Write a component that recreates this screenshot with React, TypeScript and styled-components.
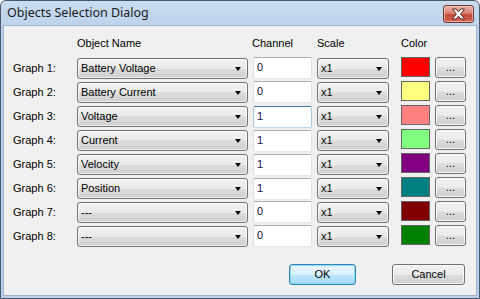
import React from 'react';
import styled, { createGlobalStyle } from 'styled-components';

interface GraphRow {
  name: string;
  channel: string;
  color: string;
  focused?: boolean;
}

const rows: GraphRow[] = [
  { name: 'Battery Voltage', channel: '0', color: '#ff0000' },
  { name: 'Battery Current', channel: '0', color: '#ffff80' },
  { name: 'Voltage', channel: '1', color: '#ff8080', focused: true },
  { name: 'Current', channel: '1', color: '#80ff80' },
  { name: 'Velocity', channel: '1', color: '#800080' },
  { name: 'Position', channel: '1', color: '#008080' },
  { name: '---', channel: '0', color: '#800000' },
  { name: '---', channel: '0', color: '#008000' },
];

const GlobalStyle = createGlobalStyle`
  html, body {
    margin: 0;
    padding: 0;
    background: #ffffff;
  }
  * {
    box-sizing: border-box;
  }
`;

const App: React.FC = () => {
  return (
    <>
      <GlobalStyle />
      <Window>
        <TitleBar>
          <Title>Objects Selection Dialog</Title>
          <CloseButton>
            <svg width="15" height="12" viewBox="0 0 15 12">
              <path
                d="M1.5 1 L5.2 1 L7.5 3.8 L9.8 1 L13.5 1 L9.6 6 L13.5 11 L9.8 11 L7.5 8.2 L5.2 11 L1.5 11 L5.4 6 Z"
                fill="#ffffff"
                stroke="#4a1a14"
                strokeWidth="0.9"
                strokeLinejoin="round"
              />
            </svg>
          </CloseButton>
        </TitleBar>
        <Client>
          <Grid>
            <span />
            <HeaderCell>Object Name</HeaderCell>
            <HeaderCell $shift={-1}>Channel</HeaderCell>
            <HeaderCell>Scale</HeaderCell>
            <HeaderCell>Color</HeaderCell>
            <span />
            {rows.map((row, i) => (
              <React.Fragment key={i}>
                <RowLabel>Graph {i + 1}:</RowLabel>
                <Combo $width={171}>
                  <span>{row.name}</span>
                  <Arrow />
                </Combo>
                <Edit $focused={row.focused} $low={i >= 2 && i <= 5}>
                  {row.channel}
                </Edit>
                <Combo $width={72}>
                  <span>x1</span>
                  <Arrow />
                </Combo>
                <Swatch style={{ background: row.color }} />
                <PushButton $width={31}>...</PushButton>
              </React.Fragment>
            ))}
          </Grid>
          <Footer>
            <PushButton $width={67} $default>
              OK
            </PushButton>
            <PushButton $width={73}>Cancel</PushButton>
          </Footer>
        </Client>
      </Window>
    </>
  );
};

export default App;

const Window = styled.div`
  width: 480px;
  height: 299px;
  display: flex;
  flex-direction: column;
  border: 1px solid #4a5868;
  border-radius: 6px 6px 0 0;
  background: linear-gradient(#c9dcf1, #b9d1ea 30px);
  padding: 0 2px 2px 2px;
  font-family: 'Liberation Sans', Arial, sans-serif;
  font-size: 11px;
  color: #000;
`;

const TitleBar = styled.div`
  height: 24px;
  display: flex;
  justify-content: space-between;
  align-items: flex-start;
  padding: 0 3px 0 4px;
`;

const Title = styled.div`
  font-family: 'Noto Sans', sans-serif;
  font-size: 12.5px;
  line-height: 24px;
  color: #1a1a1a;
`;

const CloseButton = styled.div`
  margin-top: 4px;
  width: 31px;
  height: 18px;
  border: 1px solid #6b3a34;
  border-radius: 3px;
  background: linear-gradient(#eab0a6, #d88474 45%, #c44a3a 55%, #d06656);
  box-shadow: inset 0 0 0 1px rgba(255, 220, 210, 0.55);
  display: flex;
  align-items: center;
  justify-content: center;
`;

const Client = styled.div`
  flex: 1;
  display: flex;
  flex-direction: column;
  background: #f0f0f0;
  border: 1px solid #9db5d1;
  padding: 10px 10px 0 9px;
`;

const Grid = styled.div`
  display: grid;
  grid-template-columns: 64px 176px 64px 84px 34px 31px;
  grid-template-rows: 19px;
  grid-auto-rows: 21px;
  row-gap: 3px;
  align-items: start;
`;

const HeaderCell = styled.div<{ $shift?: number }>`
  line-height: 13px;
  padding-top: 1px;
  margin-left: ${(p) => p.$shift ?? 0}px;
  margin-bottom: -2px;
`;

const RowLabel = styled.div`
  line-height: 21px;
`;

const Combo = styled.div<{ $width: number }>`
  width: ${(p) => p.$width}px;
  height: 21px;
  border: 1px solid #707070;
  border-radius: 3px;
  background: linear-gradient(#f2f2f2, #ebebeb 50%, #dddddd 50%, #cfcfcf);
  box-shadow: inset 0 0 0 1px rgba(255, 255, 255, 0.7);
  display: flex;
  align-items: center;
  justify-content: space-between;
  padding: 0 6px 0 3px;
  line-height: 19px;
`;

const Arrow = styled.span`
  width: 0;
  height: 0;
  border-left: 3.5px solid transparent;
  border-right: 3.5px solid transparent;
  border-top: 4px solid #000;
  margin-top: 1px;
`;

const Edit = styled.div<{ $focused?: boolean; $low?: boolean }>`
  width: 59px;
  height: 22px;
  margin-top: ${(p) => (p.$low ? 0 : -1)}px;
  background: #fff;
  border: 1px solid;
  border-color: ${(p) =>
    p.$focused
      ? '#3d7bad #a4c9e3 #b7d9ed #a4c9e3'
      : '#abadb3 #e2e3ea #e3e9ef #dbdfe6'};
  border-radius: 2px;
  padding: 0 3px;
  line-height: 18px;
  color: #101040;
`;

const Swatch = styled.div`
  width: 29px;
  height: 20px;
  margin-top: -1px;
  border: 1px solid #646464;
`;

const PushButton = styled.div<{ $width: number; $default?: boolean }>`
  width: ${(p) => p.$width}px;
  height: 21px;
  border: 1px solid ${(p) => (p.$default ? '#3c7fb1' : '#707070')};
  border-radius: 3px;
  background: ${(p) =>
    p.$default
      ? 'linear-gradient(#eaf6fd, #d9f0fc 50%, #bee6fd 50%, #a7d9f5)'
      : 'linear-gradient(#f2f2f2, #ebebeb 50%, #dddddd 50%, #cfcfcf)'};
  box-shadow: inset 0 0 0 1px
    ${(p) => (p.$default ? 'rgba(120, 220, 255, 0.9)' : 'rgba(255, 255, 255, 0.8)')};
  display: flex;
  align-items: center;
  justify-content: center;
  line-height: 19px;
  margin-top: -1px;
`;

const Footer = styled.div`
  display: flex;
  justify-content: flex-end;
  gap: 36px;
  padding: 18px 1px 0 0;
`;
